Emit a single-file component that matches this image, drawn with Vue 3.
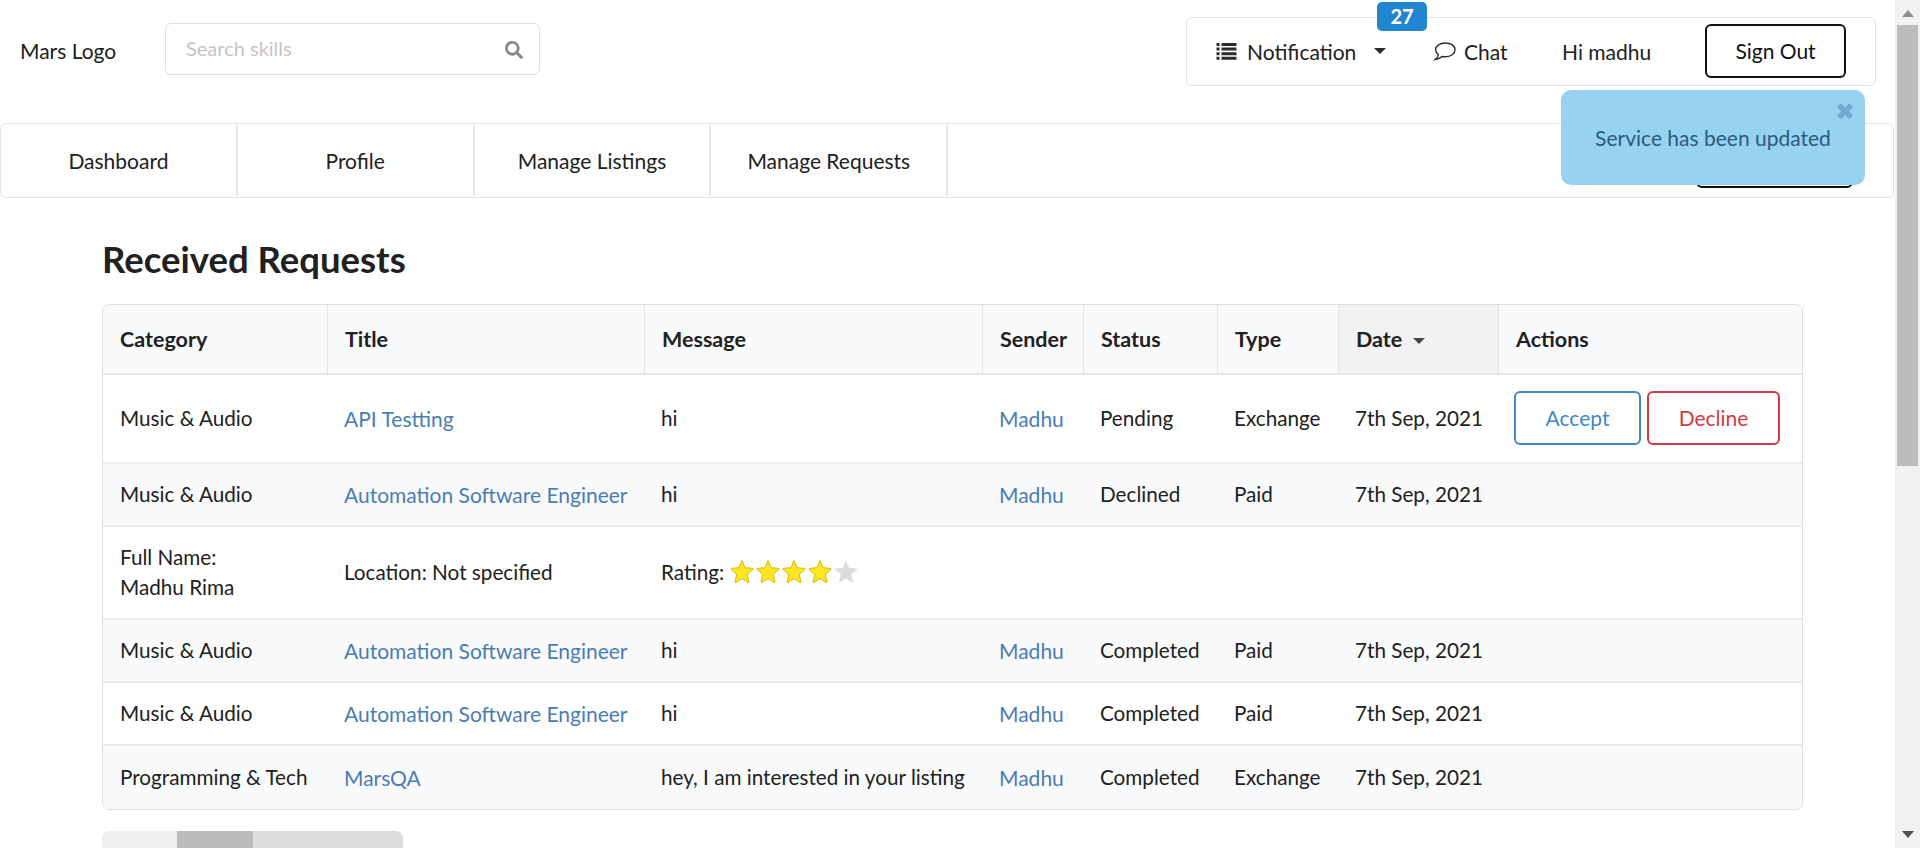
<template>
  <div class="shell">
    <div class="page">
      <header class="topbar">
        <div class="logo">Mars Logo</div>
        <div class="search">
          <span class="search-text">Search skills</span>
          <svg class="search-icon" viewBox="0 0 512 512"><path d="M505 442.700L405.300 343c-4.500-4.500-10.600-7-17-7H372c27.600-35.300 44-79.700 44-128C416 93.100 322.900 0 208 0S0 93.100 0 208s93.100 208 208 208c48.300 0 92.700-16.400 128-44v16.300c0 6.400 2.500 12.500 7 17l99.700 99.700c9.400 9.400 24.600 9.400 33.900 0l28.300-28.300c9.400-9.400 9.400-24.600.1-34zM208 336c-70.700 0-128-57.200-128-128 0-70.700 57.200-128 128-128 70.700 0 128 57.200 128 128 0 70.700-57.200 128-128 128z" /></svg>
        </div>
        <nav class="user-menu">
          <div class="menu-item notif">
            <svg class="list-icon" viewBox="0 0 20 17"><path d="M0 0h3v3H0zM5 0h15v3H5zM0 4.600h3v3H0zM5 4.600h15v3H5zM0 9.200h3v3H0zM5 9.200h15v3H5zM0 13.800h3v3H0zM5 13.800h15v3H5z" /></svg>
            <span>Notification</span>
            <i class="caret"></i>
            <span class="badge">27</span>
          </div>
          <div class="menu-item chat">
            <svg class="chat-icon" viewBox="0 0 23 19"><path d="M12.500 1C6.800 1 2.600 3.900 2.600 7.700c0 1.900 1 3.600 2.800 4.800-.2 1.800-1.200 3.300-3.200 5 3.100-.4 5.400-1.500 6.800-3 1.100.2 2.200.3 3.500.3 5.500 0 9.500-3 9.500-7.100C22 3.900 18 1 12.500 1z" /></svg>
            <span>Chat</span>
          </div>
          <div class="menu-item hi">Hi madhu</div>
          <button class="signout">Sign Out</button>
        </nav>
      </header>

      <div class="tabs">
        <a v-for="t in tabs" :key="t" class="tab">{{ t }}</a>
        <button class="tab-btn">Share Skill</button>
      </div>

      <div class="toast">
        <span class="toast-close">✖</span>
        Service has been updated
      </div>

      <main class="content">
        <h2 class="title">Received Requests</h2>
        <div class="table-wrap">
          <table class="requests">
            <colgroup>
              <col v-for="c in colWidths" :key="c" :class="c" />
            </colgroup>
            <thead>
              <tr>
                <th>Category</th>
                <th>Title</th>
                <th>Message</th>
                <th>Sender</th>
                <th>Status</th>
                <th>Type</th>
                <th class="sorted">Date <i class="sort-caret"></i></th>
                <th>Actions</th>
              </tr>
            </thead>
            <tbody>
              <template v-for="(r, i) in rows" :key="i">
                <tr v-if="r.profile" class="profile-row">
                  <td>Full Name:<br />Madhu Rima</td>
                  <td>Location: Not specified</td>
                  <td colspan="6">
                    <span class="rating">
                      Rating:
                      <svg v-for="n in 5" :key="n" class="star" :class="{ on: n <= 4 }" viewBox="0 0 24 24">
                        <path d="M12 1.500l3 7.200 7.700.7c.5 0 .7.700.3 1l-5.800 5 1.800 7.600c.1.500-.4.900-.8.600L12 19.600l-6.200 4c-.4.300-.9-.1-.8-.6l1.800-7.600-5.800-5c-.4-.3-.2-1 .3-1l7.700-.7z" />
                      </svg>
                    </span>
                  </td>
                </tr>
                <tr v-else :class="{ tall: r.actions }">
                  <td>{{ r.category }}</td>
                  <td><a>{{ r.title }}</a></td>
                  <td>{{ r.message }}</td>
                  <td><a>Madhu</a></td>
                  <td>{{ r.status }}</td>
                  <td>{{ r.type }}</td>
                  <td>7th Sep, 2021</td>
                  <td class="actions">
                    <template v-if="r.actions">
                      <button class="accept">Accept</button>
                      <button class="decline">Decline</button>
                    </template>
                  </td>
                </tr>
              </template>
            </tbody>
          </table>
        </div>
        <div class="pager">
          <span class="pg-left"></span>
          <span class="pg-active"></span>
          <span class="pg-right"></span>
        </div>
      </main>
    </div>

    <div class="vscroll">
      <i class="arrow up"></i>
      <div class="thumb"></div>
      <i class="arrow down"></i>
    </div>
  </div>
</template>

<script setup>
const tabs = ["Dashboard", "Profile", "Manage Listings", "Manage Requests"];
const colWidths = ["c1", "c2", "c3", "c4", "c5", "c6", "c7", "c8"];

const rows = [
  { category: "Music & Audio", title: "API Testting", message: "hi", status: "Pending", type: "Exchange", actions: true },
  { category: "Music & Audio", title: "Automation Software Engineer", message: "hi", status: "Declined", type: "Paid" },
  { profile: true },
  { category: "Music & Audio", title: "Automation Software Engineer", message: "hi", status: "Completed", type: "Paid" },
  { category: "Music & Audio", title: "Automation Software Engineer", message: "hi", status: "Completed", type: "Paid" },
  { category: "Programming & Tech", title: "MarsQA", message: "hey, I am interested in your listing", status: "Completed", type: "Exchange" },
];
</script>

<style>
html,
body {
  margin: 0;
  overflow: hidden;
}
</style>

<style scoped>
.shell {
  display: flex;
  height: 848px;
  overflow: hidden;
  font-family: Lato, "Open Sans", sans-serif;
  font-size: 21px;
  color: #212121;
  background: #fff;
}

.page {
  width: 1895px;
  flex: none;
  position: relative;
}

.topbar {
  display: flex;
  align-items: flex-start;
  height: 123px;
  box-sizing: border-box;
  padding-left: 20px;
}

.logo {
  margin-top: 38px;
  width: 145px;
}

.search {
  width: 375px;
  height: 52px;
  margin-top: 23px;
  box-sizing: border-box;
  border: 1px solid #dedede;
  border-radius: 6px;
  display: flex;
  align-items: center;
  justify-content: space-between;
  padding: 0 16px 3px 20px;
  font-size: 20px;
}

.search-text {
  color: #c4c4c4;
}

.search-icon {
  width: 18px;
  height: 18px;
  fill: #8a8a8a;
  margin-top: 4px;
}

.user-menu {
  margin-left: auto;
  margin-right: 19px;
  margin-top: 17px;
  width: 690px;
  height: 69px;
  box-sizing: border-box;
  border: 1px solid #e2e2e2;
  border-radius: 6px;
  display: flex;
  align-items: center;
  padding: 0 0 2px 29px;
}

.menu-item {
  display: flex;
  align-items: center;
  padding-top: 1px;
}

.notif {
  position: relative;
  width: 217px;
}

.list-icon {
  width: 21px;
  height: 17px;
  fill: #2b2b2b;
  margin-right: 10px;
}

.caret {
  width: 0;
  height: 0;
  border-left: 6px solid transparent;
  border-right: 6px solid transparent;
  border-top: 6px solid #2b2b2b;
  margin-left: 18px;
}

.badge {
  position: absolute;
  left: 161px;
  top: -36px;
  width: 50px;
  height: 29px;
  background: #2185d0;
  color: #fff;
  border-radius: 5px;
  font-weight: 700;
  font-size: 20px;
  display: flex;
  align-items: center;
  justify-content: center;
}

.chat {
  width: 129px;
}

.chat-icon {
  width: 23px;
  height: 19px;
  fill: none;
  stroke: #2b2b2b;
  stroke-width: 1.400;
  margin-right: 8px;
}

.hi {
  width: 143px;
}

.signout {
  width: 141px;
  height: 54px;
  box-sizing: border-box;
  background: #fff;
  border: 2px solid #111;
  border-radius: 6px;
  font: inherit;
  color: #111;
}

.tabs {
  display: flex;
  width: 1894px;
  height: 75px;
  box-sizing: border-box;
  border: 1px solid #e2e2e2;
  border-radius: 6px;
}

.tab {
  width: 236.800px;
  box-sizing: border-box;
  border-right: 2px solid #e8e8e8;
  display: flex;
  align-items: center;
  justify-content: center;
}

.tab-btn {
  margin: 10px 40px 0 auto;
  width: 157px;
  height: 54px;
  box-sizing: border-box;
  background: #fff;
  border: 2px solid #111;
  border-radius: 6px;
  font: inherit;
}

.toast {
  position: absolute;
  left: 1561px;
  top: 90px;
  width: 304px;
  height: 95px;
  box-sizing: border-box;
  background: #97d2f0;
  border-radius: 10px;
  color: #2b5a80;
  display: flex;
  align-items: center;
  justify-content: center;
  padding-bottom: 1px;
}

.toast-close {
  position: absolute;
  right: 10px;
  top: 8px;
  color: #6dabd0;
  font-family: "DejaVu Sans", sans-serif;
  font-size: 24px;
}

.content {
  padding: 0 0 0 102px;
}

.title {
  margin: 0;
  padding-top: 39px;
  height: 106px;
  box-sizing: border-box;
  font-size: 36.500px;
  line-height: 44px;
  font-weight: 700;
}

.table-wrap {
  width: 1701px;
  box-sizing: border-box;
  border: 1px solid #dedede;
  border-radius: 7px;
  overflow: hidden;
}

.requests {
  width: 100%;
  border-collapse: separate;
  border-spacing: 0;
  table-layout: fixed;
}

.c1 { width: 224px; }
.c2 { width: 317px; }
.c3 { width: 338px; }
.c4 { width: 101px; }
.c5 { width: 134px; }
.c6 { width: 121px; }
.c7 { width: 160px; }

th {
  background: #f9fafb;
  height: 70px;
  padding: 0 0 0 17px;
  box-sizing: border-box;
  text-align: left;
  font-weight: 700;
  font-size: 21.500px;
  border-bottom: 2px solid #e6e6e6;
  border-left: 1px solid #e4e4e4;
}

th:first-child {
  border-left: none;
}

th.sorted {
  background: #f2f2f2;
}

.sort-caret {
  display: inline-block;
  width: 0;
  height: 0;
  border-left: 6.500px solid transparent;
  border-right: 6.500px solid transparent;
  border-top: 6.500px solid #444;
  margin: 0 0 3px 6px;
}

td {
  padding: 0 0 1px 17px;
  height: 63px;
  box-sizing: border-box;
  border-bottom: 2px solid #ececec;
  white-space: nowrap;
  font-size: 20.700px;
}

th:first-child,
td:first-child {
  padding-left: 17px;
}

tbody tr:last-child td {
  border-bottom: none;
}

tbody tr:nth-child(even) td {
  background: #f9fafb;
}

tr.tall td {
  height: 89px;
}

tr.profile-row td {
  height: 93px;
  line-height: 30px;
}

td a {
  color: #4a7db5;
  font-size: 21px;
}

.rating {
  display: inline-flex;
  align-items: center;
}

.star {
  width: 24px;
  height: 24px;
  margin: 0 0 2px 2px;
  fill: #dcdcdc;
}

.rating .star:first-of-type {
  margin-left: 6px;
}

.star.on {
  fill: #ffe623;
  stroke: #d9b800;
  stroke-width: 1;
}

td.actions {
  padding-left: 16px;
}

.actions button {
  height: 54px;
  box-sizing: border-box;
  background: #fff;
  border-radius: 6px;
  font-size: 21px;
  font-family: inherit;
  padding: 0;
  margin-bottom: 1px;
}

.accept {
  width: 127px;
  border: 2px solid #3f8ac8;
  color: #3f8ac8;
  margin-right: 6px;
}

.decline {
  width: 133px;
  border: 2px solid #cf3a42;
  color: #cf3a42;
}

.pager {
  display: flex;
  width: 301px;
  height: 40px;
  margin-top: 21px;
  border-radius: 7px 7px 0 0;
  overflow: hidden;
}

.pg-left {
  width: 75px;
  background: #efefef;
}

.pg-active {
  width: 76px;
  background: #bcbcbc;
}

.pg-right {
  flex: 1;
  background: #dddddd;
}

.vscroll {
  width: 25px;
  flex: none;
  background: #f1f1f1;
  display: flex;
  flex-direction: column;
  align-items: center;
}

.thumb {
  width: 21px;
  height: 441px;
  margin-top: 8px;
  background: #bcbcbc;
}

.arrow {
  width: 0;
  height: 0;
  border-left: 6px solid transparent;
  border-right: 6px solid transparent;
}

.arrow.up {
  margin-top: 10px;
  border-bottom: 7px solid #8f8f8f;
}

.arrow.down {
  margin-top: auto;
  margin-bottom: 10px;
  border-top: 7px solid #505050;
}
</style>
